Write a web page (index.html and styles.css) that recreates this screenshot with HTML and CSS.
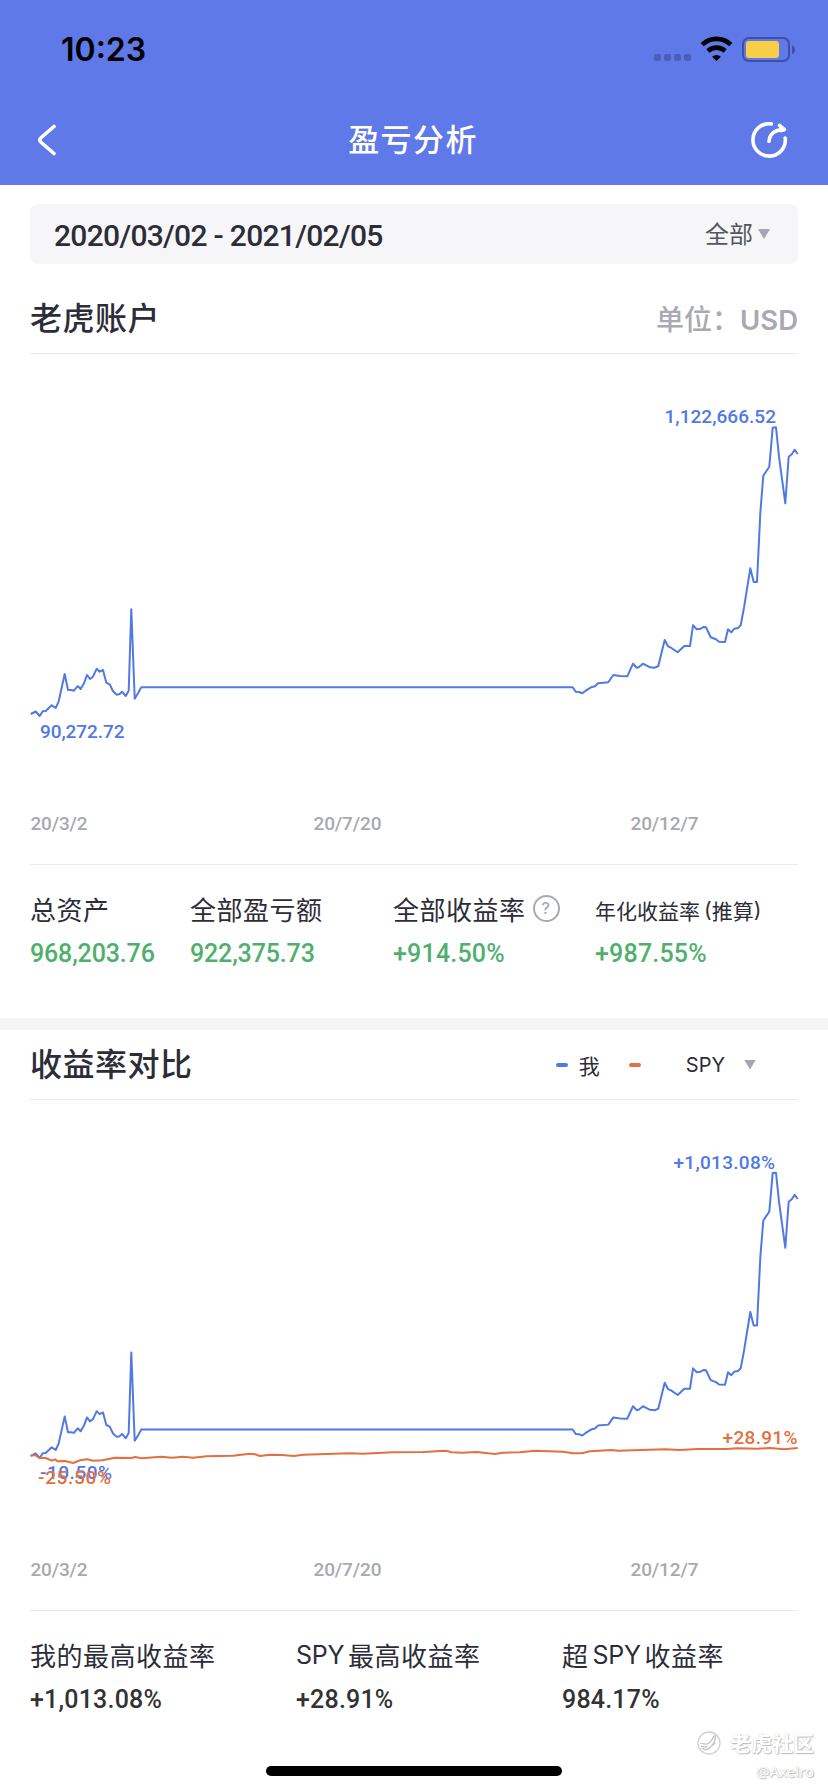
FILE: index.html
```html
<!DOCTYPE html>
<html lang="zh-CN">
<head>
  <meta charset="UTF-8">
  <meta name="viewport" content="width=device-width, initial-scale=1.0">
  <title>盈亏分析</title>
  <link rel="stylesheet" href="styles.css">
</head>
<body>
  <header>
    <div class="status-bar">
      <span class="clock">10:23</span>
      <svg class="status-icons" width="144" height="30" viewBox="0 0 144 30">
        <g fill="#4c5fb8">
          <rect x="1" y="19" width="7" height="7" rx="2"/>
          <rect x="11" y="19" width="7" height="7" rx="2"/>
          <rect x="21" y="19" width="7" height="7" rx="2"/>
          <rect x="31" y="19" width="7" height="7" rx="2"/>
        </g>
        <g fill="none" stroke="#000" stroke-width="4.6">
          <path d="M49.2 9.7a20.5 20.5 0 0 1 28.6 0"/>
          <path d="M54.9 16a12.6 12.6 0 0 1 17.2 0"/>
        </g>
        <path d="M63.5 26l-4.4-4.3a6.4 6.4 0 0 1 8.8 0z" fill="#000"/>
        <rect x="90" y="3" width="46" height="23" rx="6" fill="none" stroke="#3f4fa3" stroke-width="2"/>
        <rect x="93" y="6" width="33" height="17" rx="3" fill="#f7ce46"/>
        <path d="M139 10.5c4 1 4 7.500 0 8.500z" fill="#3f4fa3"/>
      </svg>
    </div>
    <div class="nav-bar">
      <svg width="20" height="32" viewBox="0 0 20 32">
        <path d="M17 2.500L4.200 13.500q-2.800 2.500 0 5L17 29.500" fill="none" stroke="#fff" stroke-width="3.600" stroke-linecap="round"/>
      </svg>
      <h1>盈亏分析</h1>
      <svg width="38" height="38" viewBox="0 0 38 38">
        <g fill="none" stroke="#fff" stroke-width="3.600" stroke-linecap="round" stroke-linejoin="round">
          <path d="M21.300 2.900A16.200 16.200 0 1 0 35.200 17"/>
          <path d="M19 20.300C19.500 14 23.500 8.500 34 8.600"/>
          <path d="M29.500 4.300L34.500 8.600L31 9.600"/>
        </g>
      </svg>
    </div>
  </header>

  <section class="account">
    <div class="filter">
      <span class="date-range">2020/03/02 - 2021/02/05</span>
      <span class="filter-type"><span>全部</span><i class="arrow"></i></span>
    </div>
    <div class="section-title">
      <h2>老虎账户</h2>
      <span class="unit">单位：<b>USD</b></span>
    </div>
    <svg class="chart" width="768" height="510" viewBox="30 354 768 510">
      <g id="profit-line" class="line-me">
        <path d="M30.700 714L35.700 711.500L39.700 716L42.700 711.300L45.700 711L51.700 705.300L55.700 708L58.700 701.300L64.700 674L68 690L71.300 690L74 690.700L77.700 686L80.700 689L84 683.300L87 675L90 679L93 676.700L96.700 668.700L99.700 671.700L103 670L106.300 682.700L109.700 684.300L113 691.300L116.700 694.700L119.700 694L122 691.700L125.700 696L128.700 690.700L131.300 609.300L134.700 698.700L138.300 692.700L141.300 687.300H572.700L575.700 691.700L579 692L582.300 693.300L585.700 690.700L591 687.300L595 686.300L598 683.300L608.300 682.300L613.300 675L620 676L627.300 676.300L633 663.700L636.700 667.700L639 667L643 663.700L650 667.300L655 667.700L658.300 666L664.700 640L668 646.300L671 647.700L677.700 652.300L684.300 646L690 646L693 625.300L696.700 629.300L700.700 628.700L703.300 627L706 627.300L710.700 637.300L716 639.300L719 641.700L725 642L728 629.300L731.300 632.300L734.300 628.700L738 628L740.700 625.300L744 607.700L750.300 568.300L753.700 582L757 582L760.300 513.300L763.300 475.700L769.300 466.700L772.700 427.700L776 427.300L779 456.700L785.300 503.300L788.700 456.700L791.700 454.300L794.700 449.700L797.700 454"/>
      </g>
      <g class="label-me">
        <text x="664.500" y="423" textLength="111.500">1,122,666.52</text>
        <text x="40" y="738" textLength="84.500">90,272.72</text>
      </g>
      <g class="axis">
        <text x="30.500" y="830" textLength="57">20/3/2</text>
        <text x="313.500" y="830" textLength="68">20/7/20</text>
        <text x="630.500" y="830" textLength="68">20/12/7</text>
      </g>
    </svg>
    <div class="stats stats-account">
      <div>
        <p>总资产</p>
        <strong>968,203.76</strong>
      </div>
      <div>
        <p>全部盈亏额</p>
        <strong>922,375.73</strong>
      </div>
      <div>
        <p>全部收益率<span class="help">?</span></p>
        <strong class="percent">+914.50%</strong>
      </div>
      <div>
        <p class="small">年化收益率<span class="open">(</span>推算<span>)</span></p>
        <strong class="percent">+987.55%</strong>
      </div>
    </div>
  </section>

  <section class="compare">
    <div class="section-title">
      <h2>收益率对比</h2>
      <div class="legend">
        <i class="dash dash-me"></i><span class="legend-me">我</span>
        <i class="dash dash-spy"></i><span class="legend-spy">SPY</span><i class="arrow"></i>
      </div>
    </div>
    <svg class="chart" width="768" height="510" viewBox="30 1100 768 510">
      <use href="#profit-line" transform="translate(0 750.500) scale(1 .988)"/>
      <path class="line-spy" d="M30.700 1455.700L35 1455L39.300 1458L45.700 1458L51.700 1460.700L55 1459.300L58 1461.300L65 1461L73.300 1463L80 1460.300L87.300 1459.300L93.300 1460.700L102.300 1460.300L115 1457.700L131.700 1458L135 1457L141.700 1458.300L161 1456.700L172 1457.700L183 1456.700L193 1457.700L206.700 1456.300L233 1455.700L250 1453.700L255 1454.300L260 1456L270 1454.700L282 1455L294 1456L303 1454.700L350 1453.300L363 1453.700L393 1452.300L423 1452L445.700 1450.700L451.700 1452.300L461.700 1452.700L476.700 1452L495 1454L503 1452.700L520 1452.300L535 1450.700L563 1451.700L573 1453.300L581.700 1453.300L590 1451.300L611.700 1450L618 1450.700L665 1449.300L680 1450L698 1449L727 1449L737 1448.300L757 1448.700L770 1448L784 1449.300L797.700 1448"/>
      <g class="label-me">
        <text x="673.500" y="1169" textLength="101.500">+1,013.08%</text>
        <text x="40" y="1479" textLength="72">-10.50%</text>
      </g>
      <g class="label-spy">
        <text x="722.500" y="1444" textLength="75">+28.91%</text>
        <text x="38" y="1484" textLength="73">-25.50%</text>
      </g>
      <g class="axis">
        <text x="30.500" y="1576" textLength="57">20/3/2</text>
        <text x="313.500" y="1576" textLength="68">20/7/20</text>
        <text x="630.500" y="1576" textLength="68">20/12/7</text>
      </g>
    </svg>
    <div class="stats stats-compare">
      <div>
        <p>我的最高收益率</p>
        <strong class="percent">+1,013.08%</strong>
      </div>
      <div>
        <p><span class="latin before">SPY</span>最高收益率</p>
        <strong class="percent">+28.91%</strong>
      </div>
      <div>
        <p>超<span class="latin between">SPY</span>收益率</p>
        <strong class="percent">984.17%</strong>
      </div>
    </div>
  </section>

  <div class="home-indicator"></div>

  <div class="watermark">
    <div class="watermark-brand">
      <svg width="24" height="24" viewBox="0 0 24 24">
        <g fill="none" stroke="#c4c4c4" stroke-width="1.300" stroke-linecap="round">
          <circle cx="12" cy="12" r="11" stroke="#d2d2d2"/>
          <path d="M18.500 4.500C18.500 10 17 13 13.500 16M17 4.800C16 8 14.500 10 12.500 11.500M13.500 16C10.500 19.500 7.500 19 5.500 17.500M4 12.500C7 11.500 9 15 12 12M4.500 15.500C7 15 8 17 10 15.500M16 14L18 12"/>
        </g>
      </svg>
      <span>老虎社区</span>
    </div>
    <div class="watermark-user">@Axelro</div>
  </div>
</body>
</html>
```

FILE: styles.css
```css
* {
  box-sizing: border-box;
}
body {
  position: relative;
  margin: 0;
  width: 828px;
  height: 1792px;
  overflow: hidden;
  background: #fff;
  color: #2c2d38;
  font-family: "Inter", "Noto Sans CJK SC", sans-serif;
}
h1, h2, p {
  margin: 0;
}
header {
  height: 185px;
  background: #6079e8;
}
.status-bar {
  display: flex;
  justify-content: space-between;
  height: 96px;
  padding: 35px 31px 0 61px;
}
.clock {
  color: #000;
  font-size: 32px;
  font-weight: 600;
  line-height: 30px;
}
.nav-bar {
  display: flex;
  justify-content: space-between;
  align-items: center;
  height: 88px;
  padding: 0 40px 0 37px;
  color: #fff;
}
.nav-bar h1 {
  padding: 0 0 5px 19px;
  font-size: 31px;
  font-weight: 500;
  letter-spacing: 1.4px;
}
.account {
  padding: 19px 30px 0;
  height: 833px;
}
.filter {
  display: flex;
  justify-content: space-between;
  align-items: center;
  height: 60px;
  padding: 0 28px 0 24px;
  border-radius: 8px;
  background: #f6f6f8;
}
.date-range {
  padding-top: 2px;
  font-family: "Roboto", sans-serif;
  font-size: 30px;
  font-weight: 500;
  letter-spacing: -0.7px;
}
.filter-type {
  display: flex;
  align-items: center;
  gap: 5px;
  color: #55565f;
  font-size: 24px;
}
.filter-type span {
  padding-bottom: 3px;
}
.arrow {
  width: 12px;
  height: 10px;
  background: #a5a6b2;
  clip-path: polygon(0 0, 100% 0, 50% 100%);
}
.section-title {
  display: flex;
  justify-content: space-between;
  align-items: center;
  height: 90px;
  padding-top: 20px;
  border-bottom: 1px solid #ebebeb;
}
.section-title h2 {
  font-size: 32px;
  font-weight: 500;
  line-height: 40px;
  letter-spacing: 0.5px;
}
.unit {
  padding-bottom: 2px;
  color: #a8a9b3;
  font-size: 28px;
  font-weight: 500;
}
.unit b {
  font-size: 27.5px;
  font-weight: 600;
}
.chart {
  display: block;
  overflow: visible;
}
.line-me, .line-spy {
  fill: none;
  stroke-width: 2;
  stroke-linejoin: round;
}
.line-me {
  stroke: #5079e4;
}
.line-spy {
  stroke: #e27040;
}
.chart text {
  font-family: "Roboto", sans-serif;
  font-size: 19px;
  font-weight: 500;
}
.label-me {
  fill: #5079e4;
}
.label-spy {
  fill: #e27040;
}
.axis {
  fill: #a8a9b0;
}
.stats {
  display: grid;
  border-top: 1px solid #ebebeb;
}
.stats-account {
  grid-template-columns: 160px 203px 202px 1fr;
  padding-top: 23px;
}
.stats-compare {
  grid-template-columns: 266px 266px 1fr;
  padding-top: 23px;
}
.stats p {
  display: flex;
  align-items: center;
  height: 43px;
  padding-bottom: 3px;
  font-size: 26px;
  letter-spacing: 0.5px;
  white-space: nowrap;
}
.stats .small {
  padding: 0;
  font-size: 21px;
  letter-spacing: 0;
}
.small .open {
  margin-left: 4px;
}
.stats .latin {
  padding-top: 2px;
  font-size: 25px;
  letter-spacing: -0.3px;
}
.stats .before {
  margin-right: 4px;
}
.stats .between {
  margin: 0 4px;
}
.stats strong {
  display: block;
  height: 46px;
  color: #333;
  font-family: "Roboto", sans-serif;
  font-size: 25px;
  font-weight: 500;
  line-height: 46px;
  letter-spacing: -0.15px;
}
.stats .percent {
  letter-spacing: 0.2px;
}
.stats-account strong {
  color: #4fb06d;
}
.help {
  width: 27px;
  height: 27px;
  margin-left: 7px;
  border: 2px solid #a8a9b3;
  border-radius: 50%;
  color: #a8a9b3;
  font-size: 16px;
  font-weight: 500;
  line-height: 23px;
  text-align: center;
}
.compare {
  padding: 0 30px;
  border-top: 12px solid #f5f5f6;
}
.compare .section-title {
  height: 70px;
  padding-top: 0;
}
.legend {
  display: flex;
  align-items: center;
  padding-right: 42px;
  font-size: 20px;
}
.dash {
  width: 12px;
  height: 4px;
  border-radius: 2px;
}
.dash-me {
  background: #5079e4;
}
.dash-spy {
  background: #e27040;
}
.legend-me {
  margin: 0 29px 0 11px;
  font-size: 21px;
}
.legend-spy {
  margin: 0 19px 0 45px;
}
.home-indicator {
  position: absolute;
  left: 266px;
  top: 1766px;
  width: 296px;
  height: 10px;
  border-radius: 5px;
  background: #000;
}
.watermark {
  position: absolute;
  right: 14px;
  bottom: 8px;
  color: #fff;
  text-align: right;
  text-shadow: 1px 1px 1px #bbb, 0 0 1px #bbb;
}
.watermark-brand {
  display: flex;
  align-items: center;
  gap: 9px;
  height: 36px;
  font-size: 21px;
  font-weight: 700;
}
.watermark-brand span {
  padding-bottom: 2px;
}
.watermark-user {
  height: 23px;
  font-family: "Noto Sans", sans-serif;
  font-size: 15px;
  line-height: 21px;
}
```
